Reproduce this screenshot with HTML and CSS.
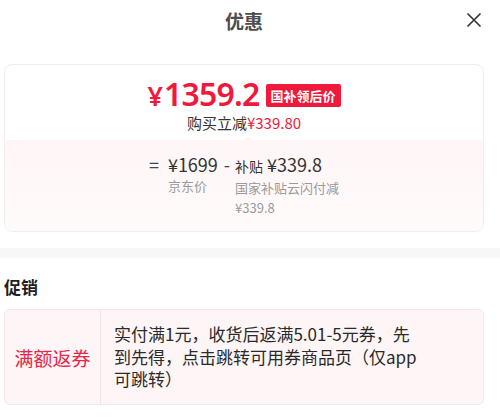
FILE: index.html
```html
<!DOCTYPE html>
<html lang="zh-CN">
  <head>
    <meta charset="UTF-8" />
    <meta name="viewport" content="width=device-width, initial-scale=1.0" />
    <title>优惠</title>
    <link rel="stylesheet" href="styles.css">
  </head>
  <body>
    <header class="sheet-head">
      <h1 class="sheet-title">优惠</h1>
      <button class="close-btn" aria-label="关闭">
        <svg width="16" height="16" viewBox="0 0 16 16">
          <path d="M1.5 1.5 L14.5 14.5 M14.5 1.5 L1.5 14.5" stroke="#333" stroke-width="1.6" fill="none" />
        </svg>
      </button>
    </header>

    <section class="wrap">
      <div class="price-card">
        <div class="price-top">
          <div class="price-line">
            <span class="price"><span class="yen">¥</span>1359.2</span>
            <span class="tag">国补领后价</span>
          </div>
          <div class="save">购买立减<em>¥339.80</em></div>
        </div>
        <div class="price-calc">
          <span class="op op-eq">=</span>
          <div class="term">
            <div class="val">¥1699</div>
            <div class="lbl">京东价</div>
          </div>
          <span class="op op-minus">-</span>
          <div class="term">
            <div class="val"><small>补贴</small>¥339.8</div>
            <div class="lbl lbl-wide">国家补贴云闪付减<br />¥339.8</div>
          </div>
        </div>
      </div>
    </section>

    <div class="band"></div>

    <section class="wrap">
      <h2 class="section-title">促销</h2>
      <div class="promo">
        <div class="promo-type">满额返券</div>
        <div class="promo-desc">实付满1元，收货后返满5.01-5元券，先到先得，点击跳转可用券商品页（仅app可跳转）</div>
      </div>
    </section>
  </body>
</html>
```

FILE: styles.css
```css
:root {
  --red: #f0193c;
  --text: #262626;
  --muted: #9a9a9a;
  --line: #efefef;
}

* {
  margin: 0;
  padding: 0;
  box-sizing: border-box;
}

body {
  width: 500px;
  font-family: "Noto Sans CJK SC", "Noto Sans", sans-serif;
  color: var(--text);
  background: #fff;
}

.sheet-head {
  position: relative;
  height: 40px;
  padding: 0 16px 0 4px;
  display: flex;
  align-items: center;
  justify-content: center;
}

.sheet-title {
  font-size: 19px;
  font-weight: 600;
  color: #4d4d4d;
  line-height: 1;
}

.close-btn {
  position: absolute;
  right: 18px;
  top: 12px;
  border: 0;
  background: none;
  width: 16px;
  height: 16px;
  display: flex;
}

.wrap {
  padding: 0 16px 0 4px;
}

.price-card {
  margin-top: 24px;
  border: 1px solid var(--line);
  border-radius: 8px;
  overflow: hidden;
}

.price-top {
  padding: 13px 0 6px;
  display: flex;
  flex-direction: column;
  align-items: center;
}

.price-line {
  display: flex;
  align-items: center;
  gap: 6px;
  height: 34px;
}

.price {
  color: var(--red);
  font-family: "Noto Sans", sans-serif;
  font-size: 32px;
  font-weight: 600;
  letter-spacing: -0.8px;
  line-height: 34px;
}

.yen {
  font-size: 27px;
  margin-right: 2px;
}

.tag {
  background: var(--red);
  color: #fff;
  font-size: 13px;
  font-weight: 700;
  line-height: 23px;
  padding: 0 5px;
  border-radius: 2px;
}

.save {
  font-size: 15px;
  line-height: 22px;
  color: #333;
}

.save em {
  font-style: normal;
  color: var(--red);
}

.price-calc {
  position: relative;
  background: linear-gradient(180deg, #fff5f6 0%, #fffbfb 100%);
  padding: 12px 0 13px;
  display: flex;
  justify-content: center;
  align-items: flex-start;
}

.price-calc::before {
  content: "";
  position: absolute;
  top: -4px;
  left: 50%;
  border-left: 4px solid transparent;
  border-right: 4px solid transparent;
  border-bottom: 4px solid #fff5f6;
}

.op {
  font-size: 18px;
  line-height: 24px;
  color: #444;
}

.op-eq {
  margin-right: 9px;
}

.op-minus {
  margin: 0 5px 0 6px;
}

.val {
  font-size: 18px;
  line-height: 24px;
  color: #333;
}

.val small {
  font-size: 14px;
  margin-right: 4px;
}

.lbl {
  font-size: 13px;
  line-height: 20px;
  color: var(--muted);
}

.lbl-wide {
  width: 104px;
}

.band {
  height: 10px;
  margin-top: 16px;
  background: #f7f7fa;
}

.section-title {
  margin-top: 18px;
  font-size: 17px;
  font-weight: 700;
  color: #1f1f1f;
  line-height: 22px;
}

.promo {
  margin-top: 11px;
  display: flex;
  background: #fdf5f6;
  border: 1px solid #f3e7e9;
  border-radius: 6px;
  min-height: 96px;
}

.promo-type {
  width: 96px;
  flex-shrink: 0;
  display: flex;
  align-items: center;
  justify-content: center;
  font-size: 19px;
  color: #e8254a;
  border-right: 1px solid #f1e3e5;
}

.promo-desc {
  align-self: center;
  padding: 0 62px 0 13px;
  font-size: 17px;
  line-height: 22.5px;
  color: #2a2a2a;
}
```
